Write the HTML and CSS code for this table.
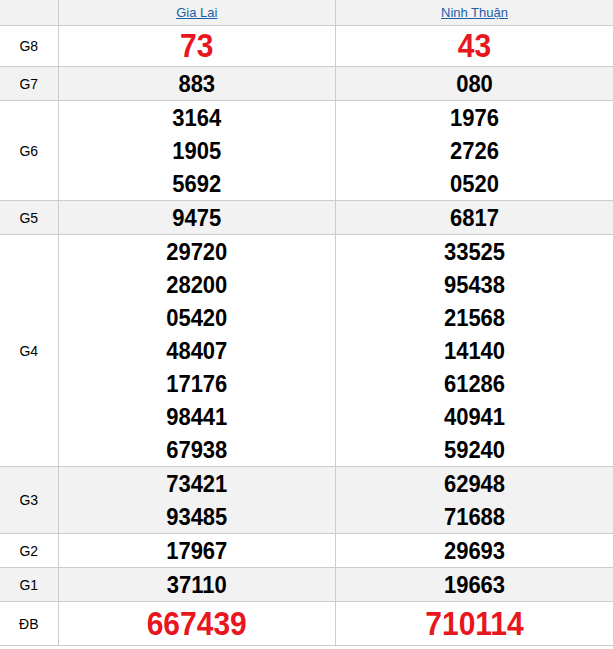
FILE: index.html
```html
<!DOCTYPE html>
<html lang="vi">
<head>
<meta charset="utf-8">
<link rel="stylesheet" href="styles.css">
</head>
<body>
<table class="kq">
  <colgroup><col class="c-label"><col><col></colgroup>
  <thead>
    <tr class="head">
      <th></th>
      <th><a href="#">Gia Lai</a></th>
      <th><a href="#">Ninh Thuận</a></th>
    </tr>
  </thead>
  <tbody>
    <tr class="g8">
      <td class="lbl">G8</td>
      <td><div class="n big red"><span>73</span></div></td>
      <td><div class="n big red"><span>43</span></div></td>
    </tr>
    <tr class="alt">
      <td class="lbl">G7</td>
      <td><div class="n"><span>883</span></div></td>
      <td><div class="n"><span>080</span></div></td>
    </tr>
    <tr>
      <td class="lbl">G6</td>
      <td><div class="n"><span>3164</span></div><div class="n"><span>1905</span></div><div class="n"><span>5692</span></div></td>
      <td><div class="n"><span>1976</span></div><div class="n"><span>2726</span></div><div class="n"><span>0520</span></div></td>
    </tr>
    <tr class="alt">
      <td class="lbl">G5</td>
      <td><div class="n"><span>9475</span></div></td>
      <td><div class="n"><span>6817</span></div></td>
    </tr>
    <tr>
      <td class="lbl">G4</td>
      <td><div class="n"><span>29720</span></div><div class="n"><span>28200</span></div><div class="n"><span>05420</span></div><div class="n"><span>48407</span></div><div class="n"><span>17176</span></div><div class="n"><span>98441</span></div><div class="n"><span>67938</span></div></td>
      <td><div class="n"><span>33525</span></div><div class="n"><span>95438</span></div><div class="n"><span>21568</span></div><div class="n"><span>14140</span></div><div class="n"><span>61286</span></div><div class="n"><span>40941</span></div><div class="n"><span>59240</span></div></td>
    </tr>
    <tr class="alt">
      <td class="lbl">G3</td>
      <td><div class="n"><span>73421</span></div><div class="n"><span>93485</span></div></td>
      <td><div class="n"><span>62948</span></div><div class="n"><span>71688</span></div></td>
    </tr>
    <tr>
      <td class="lbl">G2</td>
      <td><div class="n"><span>17967</span></div></td>
      <td><div class="n"><span>29693</span></div></td>
    </tr>
    <tr class="alt">
      <td class="lbl">G1</td>
      <td><div class="n"><span>37110</span></div></td>
      <td><div class="n"><span>19663</span></div></td>
    </tr>
    <tr class="db">
      <td class="lbl">ĐB</td>
      <td><div class="n db-n red"><span>667439</span></div></td>
      <td><div class="n db-n red"><span>710114</span></div></td>
    </tr>
  </tbody>
</table>
</body>
</html>
```
FILE: styles.css
```css
html, body {
  margin: 0;
  padding: 0;
  background: #ffffff;
}
body {
  font-family: "Liberation Sans", Arial, sans-serif;
  color: #000;
}
.kq {
  width: 613px;
  border-collapse: collapse;
  table-layout: fixed;
}
.c-label { width: 58px; }
.kq th, .kq td {
  border: 1px solid #cccccc;
  padding: 0;
  text-align: center;
  vertical-align: middle;
}
.kq tr > :first-child { border-left: none; }
.kq tr > :last-child { border-right: none; }
.kq thead th { border-top: none; }
.head th {
  background: #f2f2f2;
  height: 25px;
  font-weight: normal;
  font-size: 13px;
}
.head a {
  color: #1a5ea8;
  text-decoration: underline;
}
.alt td { background: #f2f2f2; }
.lbl {
  font-size: 14px;
  color: #000;
}
.n {
  height: 33px;
  line-height: 33px;
  font-size: 22px;
  font-weight: bold;
}
.n span {
  display: inline-block;
  transform: scaleY(1.08);
}
.n.big {
  height: 40px;
  line-height: 40px;
  font-size: 30px;
}
.n.db-n {
  height: 43px;
  line-height: 43px;
  font-size: 30px;
}
.red { color: #e8161e; }
```
